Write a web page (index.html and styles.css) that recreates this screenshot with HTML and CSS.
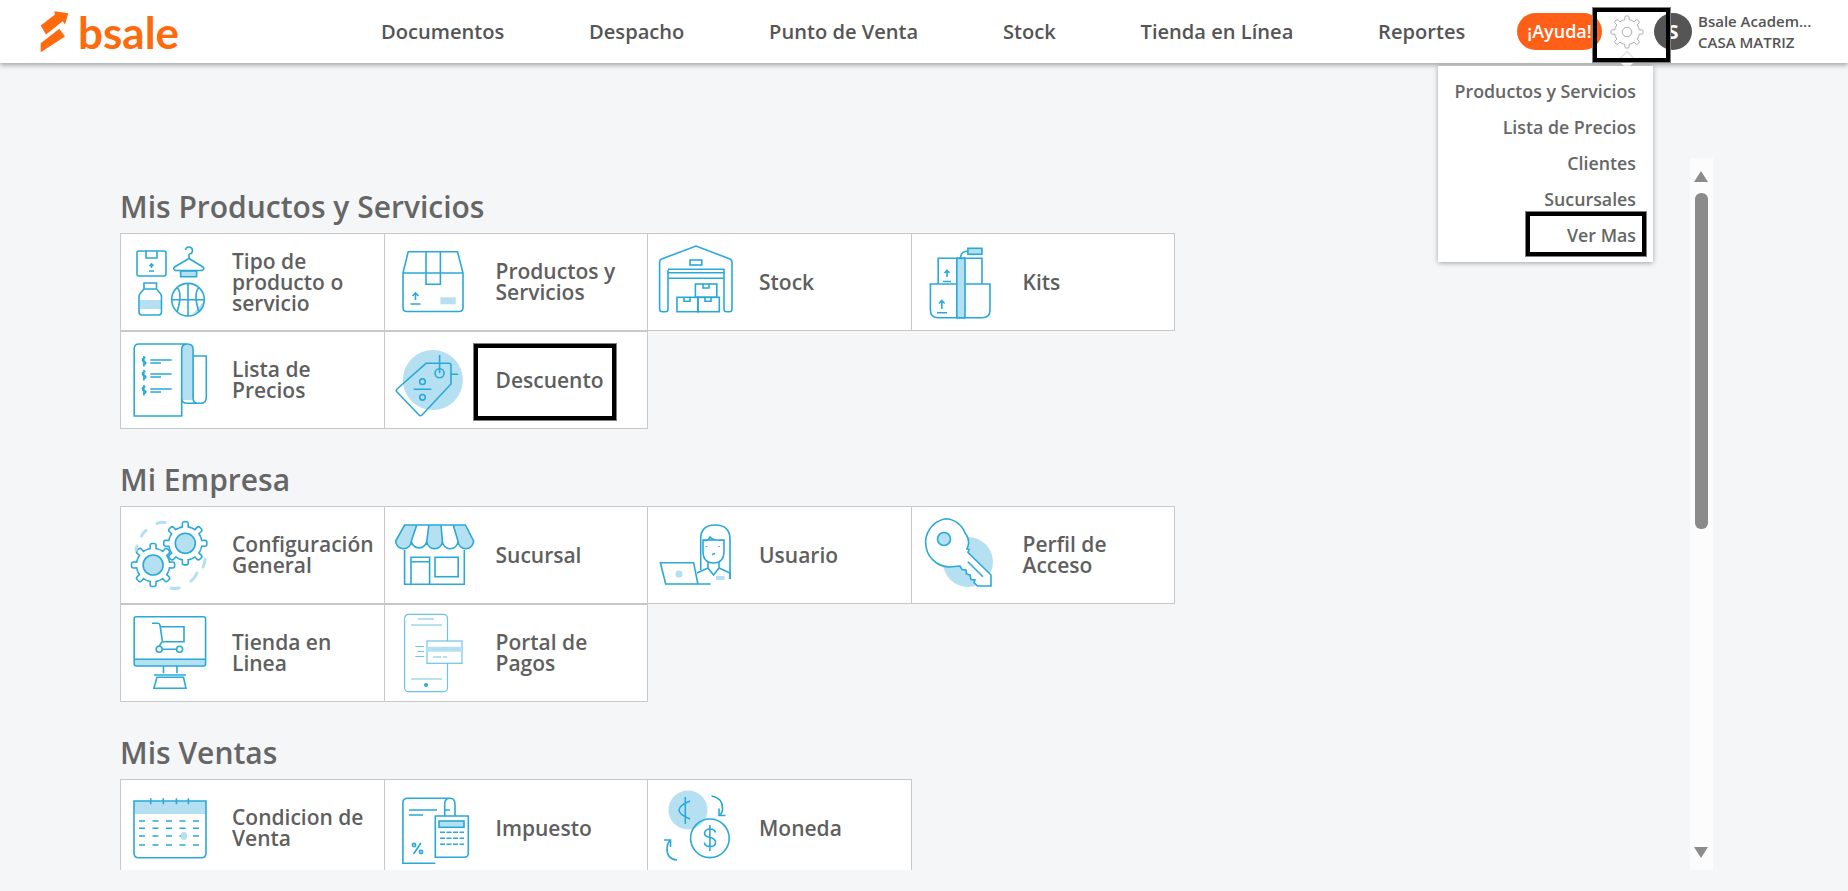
FILE: index.html
```html
<!DOCTYPE html>
<html lang="es">
<head>
<meta charset="utf-8">
<title>Bsale</title>
<link rel="stylesheet" href="styles.css">
</head>
<body>
<svg class="defs" aria-hidden="true">
  <defs>
    <g id="gear-tooth"><path d="M-6.5-15.7A17 17 0 0 1-2.95-16.74L-3-20Q-3-22-1-22H1Q3-22 3-20L2.95-16.74A17 17 0 0 1 6.5-15.7"/></g>
    <g id="gear">
      <use href="#gear-tooth"/>
      <use href="#gear-tooth" transform="rotate(45)"/>
      <use href="#gear-tooth" transform="rotate(90)"/>
      <use href="#gear-tooth" transform="rotate(135)"/>
      <use href="#gear-tooth" transform="rotate(180)"/>
      <use href="#gear-tooth" transform="rotate(225)"/>
      <use href="#gear-tooth" transform="rotate(270)"/>
      <use href="#gear-tooth" transform="rotate(315)"/>
    </g>
  </defs>
</svg>

<header class="topbar">
  <div class="brand">
    <svg class="brand-mark" viewBox="0 0 30 46"><polygon points="0.7,16.5 15,5.500 14.300,2.200 28.300,4.200 25,15.500 22.700,12.200 6,25.500"/><polygon points="0.700,34.200 19.300,19.800 25,27.500 0.700,43.200"/></svg>
    <span class="brand-name">bsale</span>
  </div>
  <nav class="nav">
    <a>Documentos</a>
    <a>Despacho</a>
    <a>Punto de Venta</a>
    <a>Stock</a>
    <a>Tienda en Línea</a>
    <a>Reportes</a>
  </nav>
  <div class="help">¡Ayuda!</div>
  <svg class="settings" viewBox="-26 -26 52 52">
    <use href="#gear"/>
    <circle r="6.500"/>
  </svg>
  <div class="avatar">S</div>
  <div class="user">
    <div>Bsale Academ...</div>
    <div>CASA MATRIZ</div>
  </div>
</header>

<main class="main">
  <div class="panel">
    <section class="group">
      <h2>Mis Productos y Servicios</h2>
      <div class="grid">
        <a class="cell">
          <svg class="ico" viewBox="0 0 90 90">
            <rect x="11" y="14" width="29" height="25" rx="2"/><path d="M20 14v7h11v-7"/><path d="M25.5 27v4M23.5 29l2-2 2 2M23 34h5"/>
            <path d="M63 17a3.5 3.5 0 1 0-3.5-4M63 17v4.5L48.5 30q-2 2 1 3.500H76q3-1.500 1-3.500L63 21.500"/><rect class="lt" x="54.600" y="34" width="16" height="5.700"/>
            <rect class="ltf" x="14" y="63" width="21" height="9"/><path d="M18 46h12.500v6l3.500 4q1.500 1.500 1.500 4v15q0 3-3 3H16q-3 0-3-3V60q0-2.500 1.500-4l3.500-4zM18 52h12.500"/>
            <path class="ltf" d="M66 78l12-14q.5 6-2 9t-10 5z"/><circle cx="62" cy="62.700" r="16.300"/><path d="M62 46.400v32.600M45.700 62.700h32.600M51 50.500q6 6 0 24.500M73 50.500q-6 6 0 24.500"/>
          </svg>
          <span>Tipo de<br>producto o<br>servicio</span>
        </a>
        <a class="cell">
          <svg class="ico" viewBox="0 0 90 90">
            <path d="M19.200 14.700H68.500L74 36v34.500q0 4-4 4H18q-4 0-4-4V36zM14 36H74M37 14.700V47.300H51.400V14.700"/>
            <path d="M26.500 63V56M23.500 59l3-3 3 3M21.500 67h10"/><rect class="ltf" x="51.400" y="60.300" width="15.300" height="7"/>
          </svg>
          <span>Productos y<br>Servicios</span>
        </a>
        <a class="cell">
          <svg class="ico" viewBox="0 0 90 90">
            <path d="M15 33V72q0 2.700-2.700 2.700H9.300Q6.600 74.700 6.600 72V25q0-2 2-3L43 9 77 22q2 1 2 3V72q0 2.700-2.700 2.700H73.700Q71 74.700 71 72V32.300H15"/>
            <rect x="37" y="23" width="11.800" height="5"/><path d="M15 35.700H71M15 41.300H71"/>
            <rect x="42.400" y="47" width="21.400" height="13.300"/><rect x="24" y="60.300" width="20.900" height="14.400"/><rect x="44.900" y="60.300" width="21.400" height="14.400"/>
            <path d="M50 47v4h6v-4M31 60.300v4h6v-4M52 60.300v4h6v-4"/>
          </svg>
          <span>Stock</span>
        </a>
        <a class="cell">
          <svg class="ico" viewBox="0 0 90 90">
            <path d="M22.200 47V21.300H66V47M14.400 47H74V73q0 7.700-7.700 7.700H22q-7.600 0-7.600-7.700z"/>
            <rect class="lt" x="40.800" y="21.300" width="8.200" height="59.400"/><rect class="lt" x="51.900" y="11.300" width="14" height="6"/><path d="M44.500 21.300q0-7 7.400-7"/>
            <path d="M31 40V33.500M28.500 36l2.500-2.500 2.500 2.500M27 44.500h8M25.800 72V63.500M23 66.500l2.800-3 2.800 3M21 75.700h10"/>
          </svg>
          <span>Kits</span>
        </a>
        <a class="cell">
          <svg class="ico" viewBox="0 0 90 90">
            <path class="ltf" d="M55.700 64V13.500q0-5.500 5.700-5.500t5.700 5.500V64z"/>
            <path d="M61 8H13q-4.800 0-4.800 4.800V80H55.700V13.500q0-5.500 5.700-5.500t5.700 5.500V62q0 5.300 5 5.300h2.300q5.900 0 5.900-6V20H67M55.700 62q0 5.300 5.400 5.300h11"/>
            <path d="M24.300 24H45.700M24.300 27H35M24.300 38H45.700M24.300 41H35M24.300 53H45.700M24.300 56H35"/>
            <path d="M19.500 21.500q-3.500.5-3 2.500t3 2q1.500 2-2.500 3M17.900 20v10.500M19.500 35.500q-3.500.5-3 2.500t3 2q1.500 2-2.500 3M17.900 34v10.500M19.500 50.500q-3.500.5-3 2.500t3 2q1.500 2-2.500 3M17.900 49v10.500"/>
          </svg>
          <span>Lista de<br>Precios</span>
        </a>
        <a class="cell">
          <svg class="ico" viewBox="0 0 90 90">
            <circle class="ltf" cx="43.900" cy="44" r="30"/>
            <path d="M37 27.300H60q2 0 2 2V48L33 79q-1.500 1.500-3 0L8 56q-1.500-1.500 0-3z"/>
            <circle cx="50.600" cy="37.300" r="4.500"/><path d="M50.600 19V37.300M62 38.300H69.200M24.600 53.300H42.400"/>
            <circle cx="33.500" cy="45.700" r="2.800"/><circle cx="33.500" cy="61.300" r="2.800"/>
          </svg>
          <span>Descuento</span>
        </a>
      </div>
    </section>

    <section class="group">
      <h2>Mi Empresa</h2>
      <div class="grid">
        <a class="cell">
          <svg class="ico" viewBox="0 0 90 90">
            <circle class="ltf" cx="27.100" cy="55" r="10"/><circle cx="27.100" cy="55" r="10"/><use href="#gear" transform="translate(27.100 55) scale(.98)"/>
            <circle class="ltf" cx="59.300" cy="33.300" r="10"/><circle cx="59.300" cy="33.300" r="10"/><use href="#gear" transform="translate(59.300 33.300) scale(.98)"/>
            <path class="dash" d="M31 13.500Q35 11.500 39 12.500M15.500 26Q17 22.500 20 20.500M10 40Q10 38 11 36M79 49Q79 53 77 57M71 63Q69 68 65 71M53 78Q49 79 45 78"/>
          </svg>
          <span>Configuración<br>General</span>
        </a>
        <a class="cell">
          <svg class="ico" viewBox="0 0 90 90">
            <path class="ltf" d="M15.600 15H27.800L22.300 31A7.800 7.800 0 0 1 6.700 31zM39.900 15H52L53.400 31A7.800 7.800 0 0 1 37.800 31zM64.200 15H76.400L84.600 31A7.800 7.800 0 0 1 69 31z"/>
            <path d="M15.600 15H76.400L84.600 31A7.800 7.800 0 0 1 69 31A7.800 7.800 0 0 1 53.400 31A7.800 7.800 0 0 1 37.800 31A7.800 7.800 0 0 1 22.300 31A7.800 7.800 0 0 1 6.700 31zM27.800 15L22.300 31M39.900 15L37.800 31M52 15L53.400 31M64.200 15L69 31"/>
            <path d="M15.600 40V74.300H75.300V40M22 74.300V47.300H40.600V74.300M22 51.700H40.600"/><rect x="46" y="47.300" width="23.200" height="19.400"/>
          </svg>
          <span>Sucursal</span>
        </a>
        <a class="cell">
          <svg class="ico" viewBox="0 0 90 90">
            <path d="M47.700 60V29q0-14 14.500-14T77 29V53q0 9 0 16"/>
            <path d="M50 30h21v11q0 12-10.500 12T50 41zM50 30q5 2 7-3 3 4 14 3"/><path d="M53.500 36v1M66 36v1M59 44.500l3-1"/>
            <path d="M55 52v6l-11 5M66 52v6l11 5v6M55 58l5.500 7 5.500-7"/><rect class="ltf" x="63" y="66" width="8.600" height="4"/>
            <path d="M7.400 52.700H40.600L44.900 74H12.700zM44.900 74H57.700"/><circle class="ltf" cx="26" cy="64" r="3.500"/>
          </svg>
          <span>Usuario</span>
        </a>
        <a class="cell">
          <svg class="ico" viewBox="0 0 90 90">
            <circle class="ltf" cx="52" cy="52" r="25"/>
            <path class="key" d="M29.400 8.700A21.500 21.500 0 0 1 49 23q5 6 3 13l-1 3 2 .5-1 3L75 65V76H61.500L58 72.500 59 70 55 69.500 54 65 50.500 64 50 60 46 59.500 44 56 38.500 56.500A21.500 21.500 0 1 1 29.400 8.700z"/>
            <circle class="ltk" cx="28" cy="29" r="6.500"/><path d="M51.900 51.700L66.900 66.700"/>
          </svg>
          <span>Perfil de<br>Acceso</span>
        </a>
        <a class="cell">
          <svg class="ico" viewBox="0 0 90 90">
            <rect class="ltf" x="8.200" y="50.300" width="71.400" height="6.700"/>
            <rect x="8.200" y="7.700" width="71.400" height="49.300" rx="2"/><path d="M8.200 50.300H79.600M37.500 57V64.300M51 57V64.300M27.900 66H60M31 68.300H57.500L60 79.300H27.900z"/>
            <path d="M26 14.300h6q1.500 0 2 2l2.500 16.400H58V17.700H33.500M36 32.700L33.200 37.500M33.200 40.300H53.600"/>
            <circle class="ltw" cx="33.200" cy="40.300" r="3"/><circle class="ltw" cx="53.600" cy="40.300" r="3"/>
          </svg>
          <span>Tienda en<br>Linea</span>
        </a>
        <a class="cell">
          <svg class="ico ico-thin" viewBox="0 0 90 90">
            <rect x="15.600" y="5.300" width="42.900" height="77.400" rx="4"/><path d="M29 10H45M22 16H53M22 70H53M26.400 37.500H35M28.500 42.500H35M26.400 47.500H35"/>
            <circle class="ltdot" cx="37" cy="76" r="2"/>
            <rect class="ltw" x="38" y="32" width="35" height="22.300"/><rect class="ltf" x="38" y="37.700" width="35" height="5"/><path d="M44 48H52M54 48H58"/>
          </svg>
          <span>Portal de<br>Pagos</span>
        </a>
      </div>
    </section>

    <section class="group">
      <h2>Mis Ventas</h2>
      <div class="grid">
        <a class="cell">
          <svg class="ico" viewBox="0 0 90 90">
            <rect class="ltf" x="8" y="18" width="72" height="13"/>
            <path d="M8 18H80V70q0 4.700-4.700 4.700H12.700Q8 74.700 8 70zM24.700 15.300V21.300M37.300 15.300V21.300M50.400 15.300V21.300M62.400 15.300V21.300"/>
            <path class="dashes" d="M13 38H76M13 45.300H76M13 53H76M13 62H76"/><ellipse class="ltf" cx="58" cy="53" rx="3.200" ry="4"/>
          </svg>
          <span>Condicion de<br>Venta</span>
        </a>
        <a class="cell">
          <svg class="ico" viewBox="0 0 90 90">
            <path d="M46.300 80.300H13.900V20q0-4.700 4.700-4.700H61q5 0 5 6V33M55.700 33V21q0-5.700 5.300-5.700M55.700 27H61"/>
            <path d="M20 27H48M20 32H34"/>
            <path d="M46.300 33H79.300V70q0 4.300-4.300 4.300H46.300z"/><rect class="lt" x="50" y="38" width="25" height="6.300"/>
            <path class="keys" d="M51 49.300H75M51 55.300H75M51 61.300H75"/>
            <path d="M24.500 71L32 60"/><circle cx="25" cy="62" r="1.600"/><circle cx="32" cy="69" r="1.600"/>
          </svg>
          <span>Impuesto</span>
        </a>
        <a class="cell">
          <svg class="ico" viewBox="0 0 90 90">
            <circle class="ltf" cx="35" cy="27" r="19.500"/>
            <path d="M32.300 14V41M37 18Q15 27 37 36"/>
            <circle cx="56.900" cy="55.300" r="19.300"/>
            <path d="M62.500 49.500q-1-3.500-5.500-3.500t-5.500 4q0 3.500 5.500 4.500t5.500 5q0 4-5.500 4t-5.500-4M56.900 42V68"/>
            <path d="M58.500 13q11.500 2 11 13 0 4-2.500 6M66 25.500V32.500H72.500M24 77Q13.500 76 14 65q0-4 3-8M17.500 64V57H11"/>
          </svg>
          <span>Moneda</span>
        </a>
      </div>
    </section>
  </div>
  <div class="scrollbar">
    <div class="arrow-up"></div>
    <div class="thumb"></div>
    <div class="arrow-down"></div>
  </div>
</main>

<div class="menu">
  <a>Productos y Servicios</a>
  <a>Lista de Precios</a>
  <a>Clientes</a>
  <a>Sucursales</a>
  <a>Ver Mas</a>
</div>
<div class="caret"></div>

<div class="mark mark-gear"></div>
<div class="mark mark-more"></div>
<div class="mark mark-desc"></div>
</body>
</html>
```

FILE: styles.css
```css
* { box-sizing: border-box; }

html, body {
  margin: 0;
  height: 100%;
  overflow: hidden;
}

body {
  background: #f5f6f8;
  font-family: "Open Sans", "Noto Sans", sans-serif;
  font-weight: 600;
  color: #5f5f5f;
  position: relative;
}

.defs {
  position: absolute;
  width: 0;
  height: 0;
}

.topbar {
  height: 63px;
  padding-right: 30px;
  background: #fff;
  display: flex;
  align-items: center;
  box-shadow: 0 2px 5px rgba(0, 0, 0, .35);
  position: relative;
  z-index: 2;
}

.brand {
  width: 381px;
  padding-left: 40px;
  display: flex;
  align-items: center;
  gap: 8px;
  flex: none;
}

.brand-mark {
  width: 30px;
  height: 46px;
  fill: #ff6a0d;
  flex: none;
}

.brand-name {
  font-family: "Lato", sans-serif;
  font-weight: 700;
  font-size: 44px;
  line-height: 46px;
  color: #ff6a0d;
}

.nav {
  flex: 1;
  display: flex;
  gap: 84.800px;
  font-size: 20.100px;
  color: #555;
}

.help {
  width: 85px;
  height: 37px;
  border-radius: 19px;
  background: #ff5f17;
  color: #fff;
  font-size: 18px;
  line-height: 37px;
  text-align: center;
  flex: none;
}

.settings {
  width: 38px;
  height: 38px;
  margin-left: 6px;
  fill: none;
  stroke: #999;
  stroke-width: 1.100;
  flex: none;
}

.avatar {
  width: 38px;
  height: 37px;
  margin-left: 8px;
  border-radius: 50%;
  background: #555;
  color: #fff;
  font-size: 20px;
  font-weight: 700;
  line-height: 37px;
  text-align: center;
  flex: none;
}

.user {
  width: 120px;
  margin-left: 6px;
  font-size: 15px;
  line-height: 21px;
  color: #555;
  white-space: nowrap;
}

.main {
  display: flex;
  padding-top: 95px;
  width: 1713px;
  height: 807px;
}

.panel {
  flex: 1;
  height: 712px;
  overflow: hidden;
  padding: 30px 0 0 120px;
}

.group {
  margin-bottom: 32px;
}

.group h2 {
  margin: 0 0 8px;
  padding-top: 1px;
  font-size: 30px;
  line-height: 36px;
  font-weight: 600;
  color: #666;
}

.grid {
  display: grid;
  grid-template-columns: repeat(4, 263.5px);
  grid-auto-rows: 98px;
}

.cell {
  margin-right: -1px;
  background: #fff;
  border: 1px solid #c8c8c8;
  display: flex;
  align-items: center;
  font-size: 21px;
  line-height: 21px;
  white-space: nowrap;
}

.cell span {
  margin-left: 16.500px;
}

.ico {
  width: 90px;
  height: 90px;
  margin-left: 4.500px;
  flex: none;
  fill: none;
  stroke: #2aa9d8;
  stroke-width: 1.6;
}

.cell:nth-child(n+5) .ico {
  margin-top: 2px;
}

.ico-thin {
  stroke: #6cc4e6;
  stroke-width: 1.2;
}

.ico .lt {
  fill: #b5e0f1;
}

.ico .ltf {
  fill: #b5e0f1;
  stroke: none;
}

.ico .ltk {
  fill: #b5e0f1;
}

.ico .ltw {
  fill: #fff;
}

.ico .ltdot {
  fill: #2aa9d8;
  stroke: none;
}

.ico .key {
  fill: #fff;
}

.ico .dash {
  stroke: #b5e0f1;
  stroke-width: 3;
  stroke-linecap: round;
}

.ico .dashes {
  stroke-dasharray: 6 7.500;
}

.ico .keys {
  stroke-dasharray: 5 1.500;
}

.scrollbar {
  width: 23px;
  height: 712px;
  background: #fcfcfc;
  flex: none;
  position: relative;
}

.thumb {
  position: absolute;
  left: 5px;
  top: 35px;
  width: 13px;
  height: 336px;
  border-radius: 6px;
  background: #8b8b8b;
}

.arrow-up,
.arrow-down {
  position: absolute;
  left: 4px;
  width: 0;
  height: 0;
  border-left: 7.500px solid transparent;
  border-right: 7.500px solid transparent;
}

.arrow-up {
  top: 13px;
  border-bottom: 11px solid #8b8b8b;
}

.arrow-down {
  bottom: 12px;
  border-top: 11px solid #8b8b8b;
}

.menu {
  position: absolute;
  left: 1438px;
  top: 66px;
  width: 215px;
  height: 196px;
  padding: 7px 17px 0 0;
  background: #fff;
  box-shadow: 0 1px 5px rgba(0, 0, 0, .35);
  display: flex;
  flex-direction: column;
  align-items: flex-end;
  font-size: 17.800px;
  color: #666;
  z-index: 3;
}

.menu a {
  height: 36px;
  line-height: 36px;
}

.caret {
  position: absolute;
  left: 1619px;
  top: 52px;
  width: 16px;
  height: 16px;
  background: #fff;
  border-left: 1px solid #d0d0d0;
  border-top: 1px solid #d0d0d0;
  transform: rotate(45deg) scale(.8);
  z-index: 2;
}

.mark {
  position: absolute;
  border: 4px solid #000;
  outline: 1px solid #808080;
  z-index: 4;
}

.mark-gear {
  left: 1593px;
  top: 8px;
  width: 77px;
  height: 54px;
}

.mark-more {
  left: 1526px;
  top: 212px;
  width: 120px;
  height: 44px;
}

.mark-desc {
  left: 474px;
  top: 344px;
  width: 142px;
  height: 76px;
}
```
